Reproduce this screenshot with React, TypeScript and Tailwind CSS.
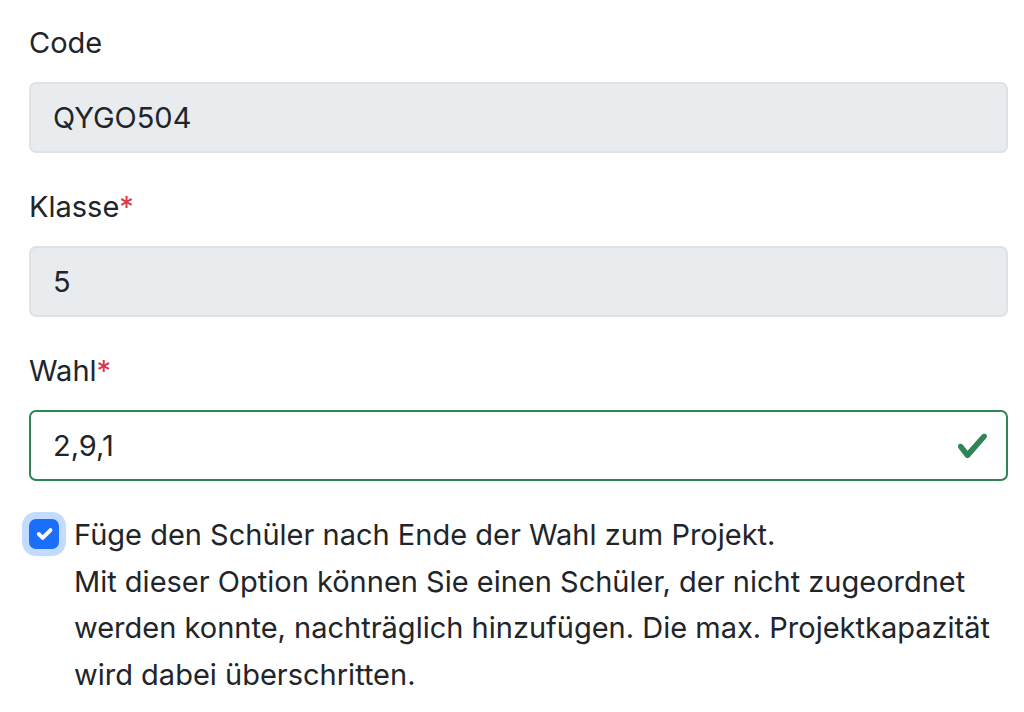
import React from "react";

const font = { fontFamily: 'Inter, "Liberation Sans", Arial, sans-serif' };

function Label({ text, required }: { text: string; required?: boolean }) {
  return (
    <label className="block text-[29px] leading-[46.5px] mb-[15.5px]">
      {text}
      {required && <span className="text-[#dc3545]">*</span>}
    </label>
  );
}

export default function App() {
  return (
    <div className="w-[1024px] h-[712px] bg-white pl-[29px] pt-[20px] text-[#212529] overflow-hidden" style={font}>
      <div className="w-[979px]">
        <Label text="Code" />
        <div className="h-[71px] rounded-[7px] border-2 border-[#dee2e6] bg-[#e9ecef] px-[22px] flex items-center text-[29px]">
          QYGO504
        </div>
        <div className="h-[31px]" />
        <Label text="Klasse" required />
        <div className="h-[71px] rounded-[7px] border-2 border-[#dee2e6] bg-[#e9ecef] px-[22px] flex items-center text-[29px]">
          5
        </div>
        <div className="h-[31px]" />
        <Label text="Wahl" required />
        <div className="relative h-[71px] rounded-[7px] border-2 border-[#2f8556] bg-white px-[22px] flex items-center text-[29px]">
          2,9,1
          <svg className="absolute right-[17px] top-1/2 -translate-y-1/2 w-[33px] h-[33px]" viewBox="0 0 8 8">
            <path fill="#2f8556" d="M2.3 6.73.6 4.53c-.4-1.04.46-1.4 1.1-.8l1.1 1.4 3.4-3.8c.6-.63 1.6-.27 1.2.7l-4 4.6c-.43.5-.8.4-1.1.1z" />
          </svg>
        </div>
        <div className="h-[31px]" />
        <div className="flex text-[29px] leading-[46.5px]">
          <div className="w-[45px] shrink-0 pt-[7px]">
            <div className="w-[30px] h-[30px] rounded-[7px] bg-[#1a6ef9] border-2 border-[#1a6ef9] shadow-[0_0_0_7px_rgba(13,110,253,0.25)] flex items-center justify-center">
              <svg viewBox="0 0 20 20" className="w-[30px] h-[30px]">
                <path fill="none" stroke="#fff" strokeLinecap="round" strokeLinejoin="round" strokeWidth="3" d="m6 10 3 3 6-6" />
              </svg>
            </div>
          </div>
          <div>
            Füge den Schüler nach Ende der Wahl zum Projekt.
            <br />
            Mit dieser Option können Sie einen Schüler, der nicht zugeordnet werden konnte, nachträglich hinzufügen. Die max. Projektkapazität wird dabei überschritten.
          </div>
        </div>
      </div>
    </div>
  );
}
